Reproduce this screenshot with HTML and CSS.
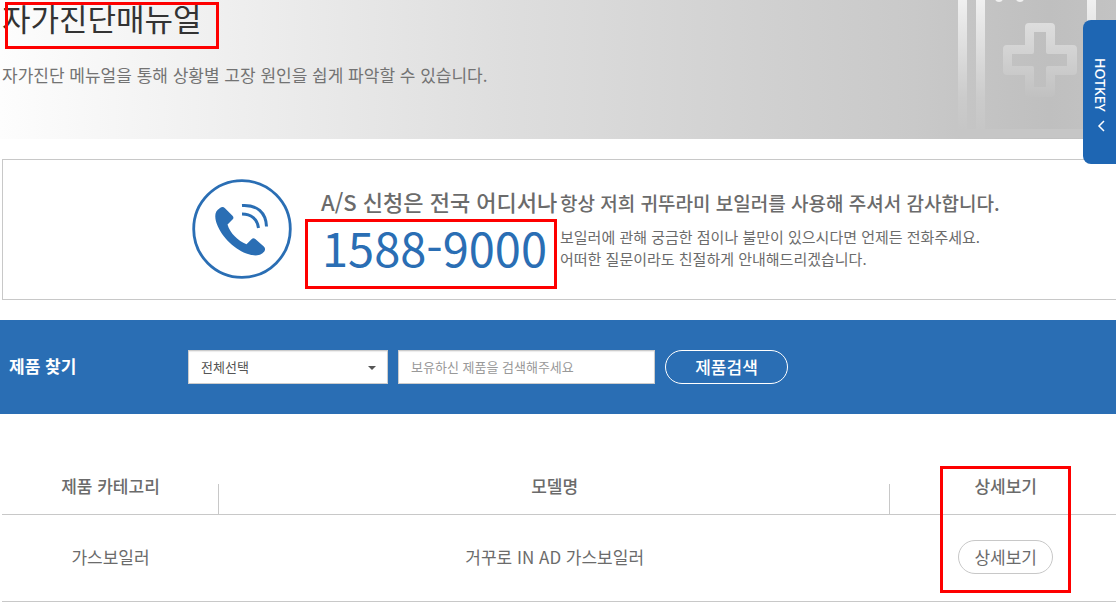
FILE: index.html
```html
<!DOCTYPE html>
<html lang="ko">
<head>
<meta charset="utf-8">
<meta name="viewport" content="width=device-width, initial-scale=1">
<title>자가진단매뉴얼</title>
<link rel="stylesheet" href="styles.css">
</head>
<body>
<header class="hero">
  <svg class="hero-art" viewBox="0 0 160 139" aria-hidden="true">
    <defs>
      <linearGradient id="fade" gradientUnits="userSpaceOnUse" x1="0" y1="0" x2="0" y2="130">
        <stop offset="0" stop-color="#f0f0f0"/>
        <stop offset="0.75" stop-color="#cbcbcb"/>
        <stop offset="1" stop-color="#c6c6c6"/>
      </linearGradient>
      <linearGradient id="cross" gradientUnits="userSpaceOnUse" x1="0" y1="22" x2="0" y2="97">
        <stop offset="0" stop-color="#dedede"/>
        <stop offset="1" stop-color="#c1c1c1"/>
      </linearGradient>
    </defs>
    <path d="M2 0h9v129h9V0h9v129h102V0h9v134q0 4-4 4H6q-4 0-4-4z" fill="url(#fade)"/>
    <circle cx="43" cy="-2" r="4" fill="#f0f0f0"/>
    <circle cx="64" cy="-2" r="4" fill="#f0f0f0"/>
    <path fill-rule="evenodd" d="M73 23h22q4 0 4 4v18h18q4 0 4 4v22q0 4-4 4H99v18q0 4-4 4H73q-4 0-4-4V75H51q-4 0-4-4V49q0-4 4-4h18V27q0-4 4-4zM78 32v20q0 2-2 2H56v12h20q2 0 2 2v19h12V68q0-2 2-2h19V54H92q-2 0-2-2V32z" fill="url(#cross)"/>
  </svg>
  <h1 class="hero-title">자가진단매뉴얼<span class="mark mark-title"></span></h1>
  <p class="hero-text">자가진단 메뉴얼을 통해 상황별 고장 원인을 쉽게 파악할 수 있습니다.</p>
</header>

<button class="hotkey" type="button">
  <span>HOTKEY</span>
  <svg width="12" height="8" viewBox="0 0 12 8" class="hotkey-arrow" aria-hidden="true"><path d="M1 1l5 5 5-5" fill="none" stroke="#fff" stroke-width="1.5"/></svg>
</button>

<main>
  <section class="contact">
    <svg class="phone" viewBox="0 0 100 100" aria-hidden="true">
      <circle cx="50" cy="50" r="48.3" fill="none" stroke="#2a6eb4" stroke-width="2.8"/>
      <path d="M28 29c2-1.500 3.500-1.200 5 .3l7.500 7.500c1.300 1.300 1.200 2.500 0 3.800L35.500 45.500C38 54 46 62 54.500 65.300l5-5c1.300-1.200 2.500-1.200 3.800-.2l8.500 7.500c1.500 1.500 1.700 3 .5 4.800-4 5-10 5-18 2C41 69.500 28 56 24 42.500c-1.500-6-1-10.500 4-13.500z" fill="#2a6eb4"/>
      <path d="M50 35c9 0 15.500 5 16.500 14M50 26.500c15-1 24 7 24.500 21" fill="none" stroke="#2a6eb4" stroke-width="3"/>
    </svg>
    <div class="call">
      <p class="call-title">A/S 신청은 전국 어디서나</p>
      <p class="call-number">1588-9000<span class="mark mark-number"></span></p>
    </div>
    <div class="notice">
      <h2 class="notice-title">항상 저희 귀뚜라미 보일러를 사용해 주셔서 감사합니다.</h2>
      <p class="notice-text">보일러에 관해 궁금한 점이나 불만이 있으시다면 언제든 전화주세요.<br>어떠한 질문이라도 친절하게 안내해드리겠습니다.</p>
    </div>
  </section>

  <form class="search">
    <label class="search-label" for="category">제품 찾기</label>
    <div class="select-wrap">
      <select id="category" class="field"><option>전체선택</option></select>
    </div>
    <input class="field keyword" type="text" aria-label="제품 검색어" placeholder="보유하신 제품을 검색해주세요">
    <button class="search-button" type="button">제품검색</button>
  </form>

  <section class="products">
    <table class="product-table">
      <thead>
        <tr><th class="col-category">제품 카테고리</th><th class="col-model">모델명</th><th>상세보기</th></tr>
      </thead>
      <tbody>
        <tr>
          <td>가스보일러</td>
          <td>거꾸로 IN AD 가스보일러</td>
          <td><div class="detail"><button class="detail-button" type="button">상세보기</button><span class="mark mark-detail"></span></div></td>
        </tr>
      </tbody>
    </table>
  </section>
</main>
</body>
</html>
```
FILE: styles.css
```css
* { box-sizing: border-box; }

body {
  margin: 0;
  position: relative;
  overflow-x: hidden;
  background: #fff;
  color: #6b6b6b;
  font-family: "Noto Sans CJK KR", "Noto Sans", sans-serif;
  font-size: 17px;
}

h1, h2, p { margin: 0; }

button, input, select { font-family: inherit; }

.mark {
  position: absolute;
  border: 3px solid #fe0000;
  pointer-events: none;
}

.hero {
  position: relative;
  height: 139px;
  padding-left: 2px;
  background: linear-gradient(90deg, #fdfdfd 0%, #dedede 45%, #c9c9c9 82%, #bfbfbf 94%, #c3c3c3 100%);
}

.hero-art {
  position: absolute;
  top: 0;
  right: 0;
  width: 160px;
  height: 139px;
}

.hero-title {
  position: relative;
  color: #333;
  font-size: 31px;
  font-weight: 400;
  line-height: 36px;
}

.mark-title { left: 3px; top: 2px; width: 214px; height: 47px; }

.hero-text {
  position: relative;
  padding-top: 27px;
  color: #737373;
  font-size: 17px;
  line-height: 24px;
}

.hotkey {
  position: absolute;
  top: 20px;
  right: 0;
  display: flex;
  flex-direction: column;
  align-items: center;
  gap: 10px;
  width: 33px;
  height: 144px;
  padding: 38px 0 0 2px;
  border: 0;
  border-radius: 8px 0 0 8px;
  background: #1e66b3;
  color: #fff;
  font-family: "Noto Sans", sans-serif;
  font-size: 14px;
  font-weight: 500;
}

.hotkey span { writing-mode: vertical-rl; }
.hotkey-arrow { transform: rotate(90deg); }

.contact {
  display: flex;
  height: 141px;
  margin: 20px 0 20px 2px;
  padding: 19px 0 0 189px;
  border: 1px solid #c8c8c8;
  border-right: 0;
  white-space: nowrap;
}

.phone { flex: none; width: 100px; height: 100px; }

.call { flex: none; width: 239px; margin-left: 29px; padding-top: 4px; }

.call-title { font-size: 22px; font-weight: 500; line-height: 36px; }

.call-number {
  position: relative;
  padding-left: 1px;
  color: #2a6eb4;
  font-size: 47px;
  line-height: 56px;
}

.mark-number { left: -16px; top: 0; width: 252px; height: 70px; }

.notice { padding-top: 10px; }
.notice-title { font-size: 19px; font-weight: 500; line-height: 28px; }
.notice-text { padding-top: 9px; font-size: 15px; line-height: 22px; }

.search {
  display: flex;
  align-items: center;
  gap: 10px;
  height: 94px;
  padding-left: 9px;
  background: #2a6eb4;
}

.search-label { width: 169px; color: #fff; font-size: 17px; font-weight: 700; line-height: 24px; padding-bottom: 2px; }

.select-wrap { position: relative; width: 200px; }

.select-wrap::after {
  content: "";
  position: absolute;
  right: 12px;
  top: 16px;
  border: 4px solid transparent;
  border-top-color: #555;
  border-bottom: 0;
  pointer-events: none;
}

.field {
  width: 100%;
  height: 34px;
  padding: 0 12px 2px;
  border: 1px solid #ccc;
  border-radius: 0;
  background: #fff;
  box-shadow: inset 0 1px 1px rgba(0, 0, 0, .08);
  color: #555;
  font-size: 13px;
  appearance: none;
}

.keyword { width: 257px; }
.keyword::placeholder { color: #999; }

.search-button {
  width: 123px;
  height: 34px;
  padding: 0 0 2px;
  border: 1px solid #fff;
  border-radius: 17px;
  background: transparent;
  color: #fff;
  font-size: 17px;
  font-weight: 500;
}

.products { margin-right: -5px; padding: 46px 0 0 2px; }

.product-table {
  width: 100%;
  table-layout: fixed;
  border-collapse: collapse;
  text-align: center;
}

.product-table th {
  height: 54px;
  padding: 0 0 2px;
  border-bottom: 1px solid #c8c8c8;
  background: linear-gradient(#c8c8c8, #c8c8c8) right bottom / 0 30px no-repeat;
  font-size: 17px;
  font-weight: 500;
}

.product-table .col-category { width: 217px; background-size: 1px 30px; }
.product-table .col-model { width: 60%; background-size: 1px 30px; }

.product-table td { height: 87px; padding: 0 0 2px; border-bottom: 1px solid #c8c8c8; font-size: 17px; }

.detail { position: relative; display: inline-block; }

.detail-button {
  width: 95px;
  height: 34px;
  padding: 0;
  border: 1px solid #c8c8c8;
  border-radius: 17px;
  background: #fff;
  color: #6b6b6b;
  font-size: 17px;
}

.mark-detail { left: -18px; top: -74px; width: 131px; height: 127px; }
```
